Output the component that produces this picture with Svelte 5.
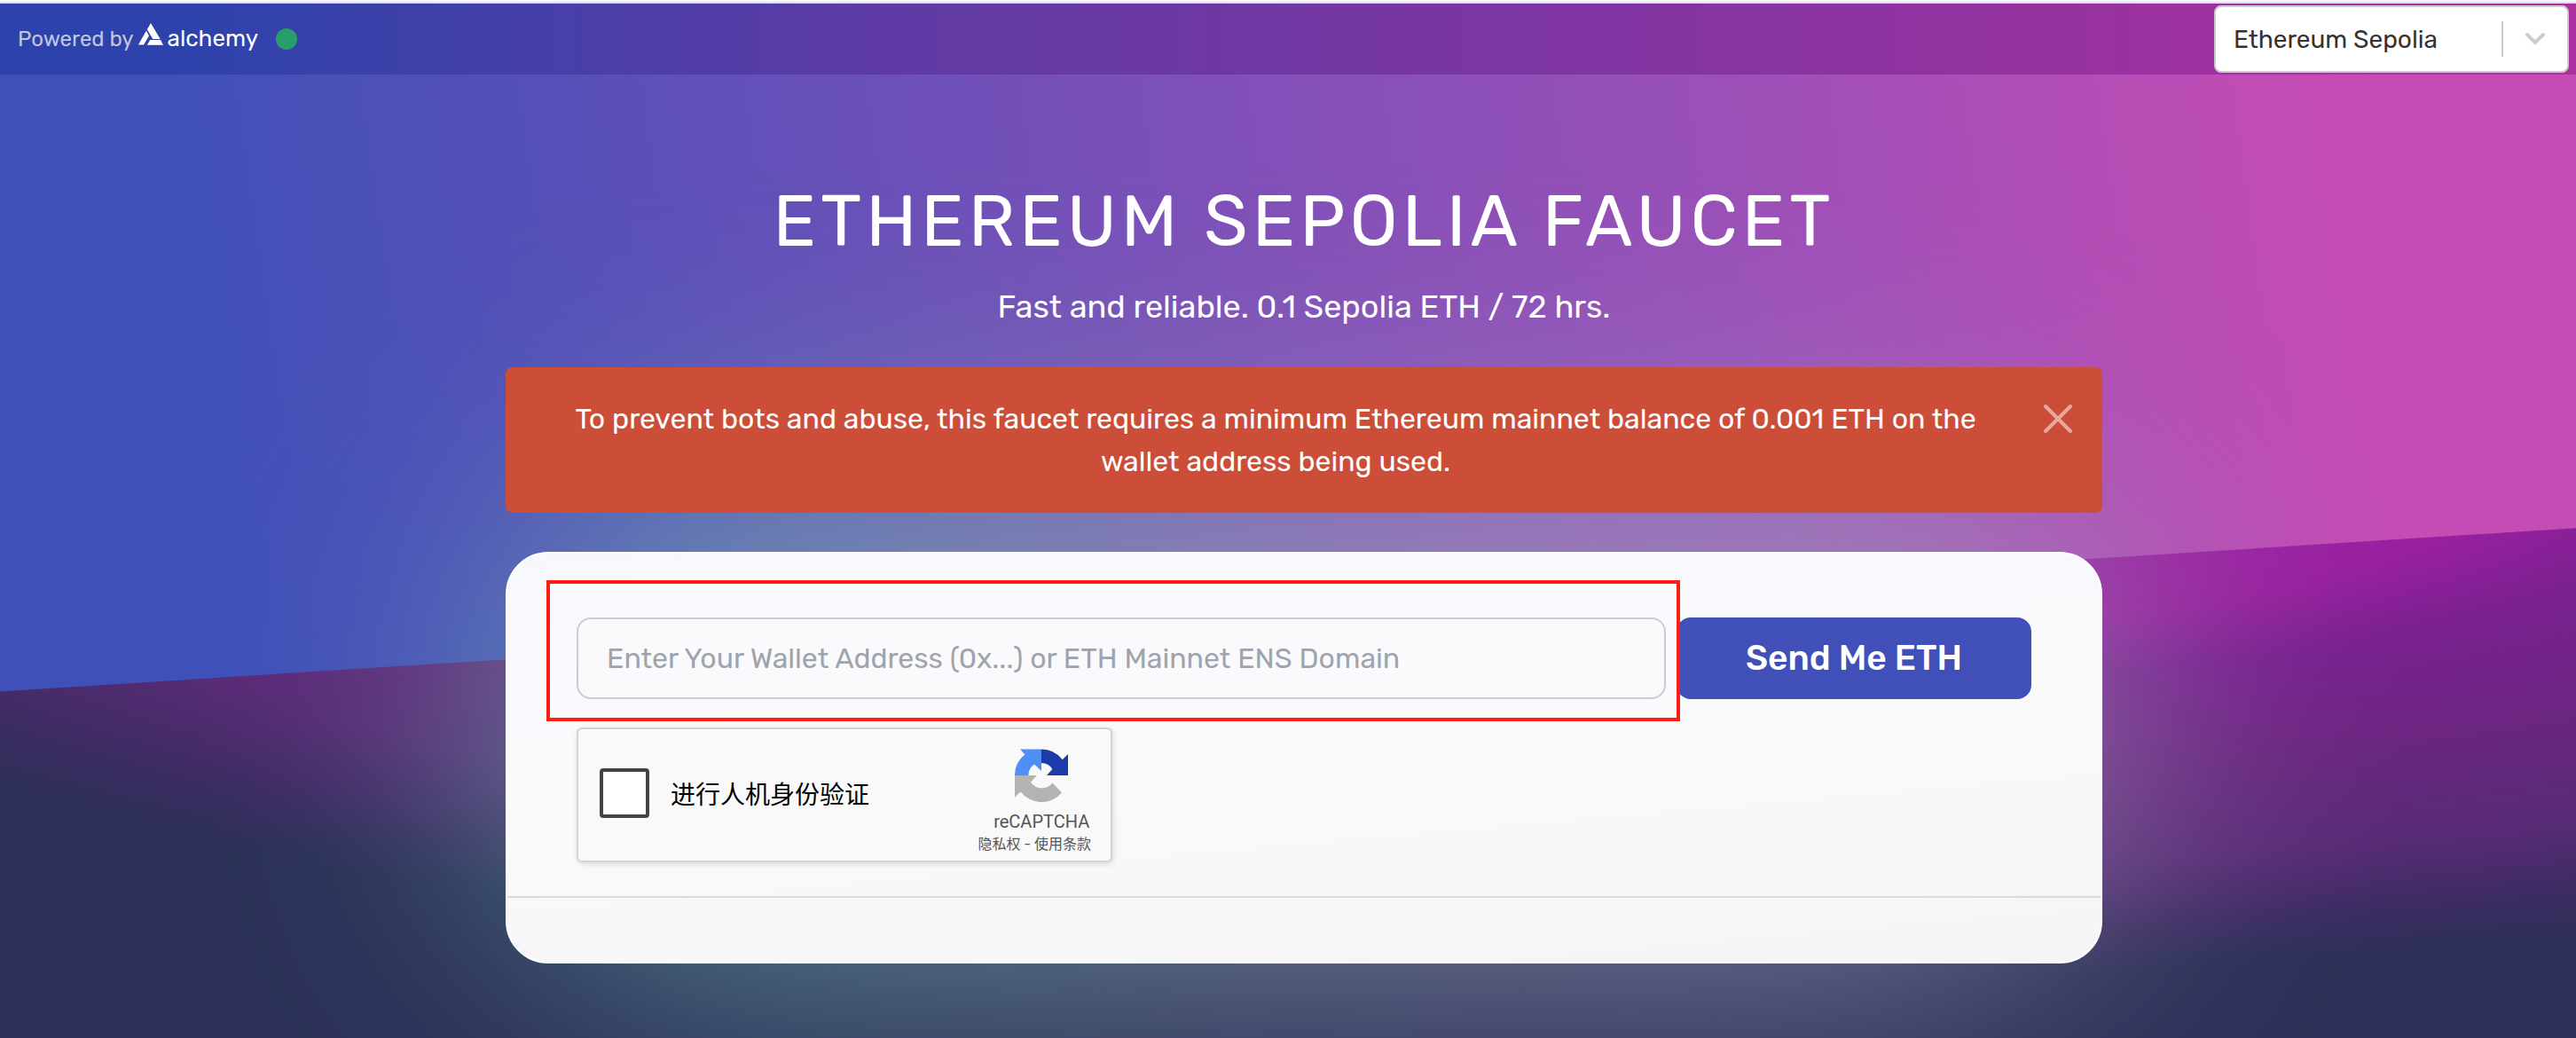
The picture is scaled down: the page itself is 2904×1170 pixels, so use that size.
<script>
  let network = $state('sepolia');
  let address = $state('');
  let verified = $state(false);
  let noticeOpen = $state(true);
</script>

<div class="page">
  <div class="backdrop" aria-hidden="true">
    <div class="upper"></div>
    <div class="lower"></div>
  </div>

  <header>
    <a class="brand" href="#alchemy">
      <span class="powered">Powered by</span>
      <svg class="mark" viewBox="0 0 28 26" aria-hidden="true">
        <path d="M14 0 L9.8 7.2 L16.4 18 H24.6 Z" />
        <path d="M8.8 8.8 L0 24.6 H6 L12 14.2 Z" />
        <path d="M13.2 19 L9.8 24.8 H28 L25 19 Z" />
      </svg>
      <span class="name">alchemy</span>
    </a>
    <span class="status" role="img" aria-label="Online"></span>
    <div class="network">
      <select aria-label="Network" bind:value={network}>
        <option value="sepolia">Ethereum Sepolia</option>
      </select>
      <span class="bar"></span>
      <svg viewBox="0 0 24 16" aria-hidden="true"><path d="M3 3 L12 12 L21 3" /></svg>
    </div>
  </header>

  <main>
    <h1>ETHEREUM SEPOLIA FAUCET</h1>
    <p class="tagline">Fast and reliable. 0.1 Sepolia ETH / 72 hrs.</p>

    {#if noticeOpen}
      <div class="notice">
        <p>
          To prevent bots and abuse, this faucet requires a minimum Ethereum mainnet balance of 0.001 ETH on the
          <br />wallet address being used.
        </p>
        <button class="close" aria-label="Close" onclick={() => (noticeOpen = false)}>
          <svg viewBox="0 0 32 32" aria-hidden="true"><path d="M2 2 L30 30 M30 2 L2 30" /></svg>
        </button>
      </div>
    {/if}

    <div class="panel">
      <div class="glow" aria-hidden="true"></div>
      <form class="card" onsubmit={(e) => e.preventDefault()}>
        <div class="body">
          <div class="entry">
            <div class="field">
              <input
                type="text"
                aria-label="Wallet address"
                placeholder="Enter Your Wallet Address (0x...) or ETH Mainnet ENS Domain"
                bind:value={address}
              />
              <span class="highlight"></span>
            </div>
            <button class="send" type="submit">Send Me ETH</button>
          </div>

          <div class="captcha">
            <label><input type="checkbox" bind:checked={verified} />进行人机身份验证</label>
            <div class="provider">
              <svg viewBox="0 0 60 60" aria-hidden="true">
                <path fill="#1c3aa9" d="M60 30V6l-6.300 6.300A30 30 0 0 0 30 .6V16a14.500 14.500 0 0 1 12.400 7L36 30Z" />
                <path fill="#4d8ff5" d="M30 .6H6l5.300 5.800A30 30 0 0 0 0 30H15.400A15 15 0 0 1 22 17.600L30 25Z" />
                <path fill="#b3b3b3" d="M0 30V54.500l6.500-6A30 30 0 0 0 53 49.500L42.500 38.500A15 15 0 0 1 18 37.500L25 30Z" />
              </svg>
              <span class="product">reCAPTCHA</span>
              <span class="links"><a href="#privacy">隐私权</a> - <a href="#terms">使用条款</a></span>
            </div>
          </div>
        </div>
        <div class="footer"></div>
      </form>
    </div>
  </main>
</div>

<style>
  :global(body) {
    margin: 0;
  }

  .page {
    position: relative;
    isolation: isolate;
    overflow: hidden;
    box-sizing: border-box;
    min-height: 100vh;
    border-top: 2px solid #f8f8fc;
    font-family: Rubik, Roboto, 'Noto Sans CJK SC', sans-serif;
    color: #fff;
  }

  .backdrop {
    position: absolute;
    inset: 0;
    z-index: -2;
    border-top: 2px solid #dfe0ec;
  }

  .upper,
  .lower {
    position: absolute;
    inset: 0;
  }

  .upper {
    background: linear-gradient(82deg, #3f50b9 10%, #5a50b8 27%, #7e50b8 49%, #9a50b8 68%, #c54cb4 91%);
  }

  .lower {
    clip-path: polygon(0 66.500%, 100% 50.700%, 100% 100%, 0 100%);
    background:
      radial-gradient(
        ellipse 88% 51% at 67% 43%,
        #a82ab0,
        #98209f 36%,
        #7a2090 46%,
        #6a2680 63%,
        #582b76 80%,
        #3c2c62 92%,
        #2c3058
      );
  }

  header {
    display: flex;
    align-items: center;
    box-sizing: border-box;
    height: 80px;
    margin-top: 2px;
    padding: 0 8px 0 20px;
    background: linear-gradient(90deg, #2d43ab 7%, #5e3ba4 34%, #8035a2 62%, #ac309f 98%);
  }

  .brand {
    display: flex;
    align-items: baseline;
    gap: 5px;
    padding-bottom: 4px;
    color: #fff;
    text-decoration: none;
  }

  .powered {
    color: #c3c6dd;
    font-size: 24px;
  }

  .mark {
    width: 28px;
    height: 26px;
    fill: #fff;
  }

  .name {
    font-size: 26px;
  }

  .status {
    width: 24px;
    height: 24px;
    margin-left: 20px;
    border-radius: 50%;
    background: #289e68;
  }

  .network {
    display: flex;
    align-items: center;
    box-sizing: border-box;
    width: 400px;
    height: 76px;
    margin-left: auto;
    padding-right: 24px;
    border: 2px solid #ccc;
    border-radius: 8px;
    background: #fff;
  }

  .network select {
    flex: 1;
    height: 100%;
    padding: 0 20px;
    border: 0;
    appearance: none;
    background: none;
    color: #333;
    font: inherit;
    font-size: 28px;
  }

  .bar {
    width: 2px;
    height: 40px;
    margin-right: 24px;
    background: #ccc;
  }

  .network svg {
    width: 24px;
    height: 16px;
    fill: none;
    stroke: #ccc;
    stroke-width: 4;
    stroke-linecap: round;
  }

  main {
    display: flex;
    flex-direction: column;
    align-items: stretch;
    max-width: 1800px;
    margin: 0 auto;
    padding: 116px 0 80px 36px;
  }

  h1 {
    margin: 0;
    font-size: 80px;
    font-weight: 400;
    line-height: 100px;
    letter-spacing: 5px;
    text-align: center;
  }

  .tagline {
    margin: 24px 0 46px;
    font-size: 36px;
    line-height: 44px;
    text-align: center;
  }

  .notice {
    position: relative;
    display: flex;
    align-items: flex-start;
    padding: 34px 34px 34px 34px;
    border-radius: 8px;
    background: #cc4e39;
  }

  .notice p {
    flex: 1;
    margin: 0;
    font-size: 32px;
    line-height: 48px;
    text-align: center;
  }

  .close {
    display: flex;
    margin: 8px 0 0 32px;
    padding: 0;
    border: 0;
    background: none;
  }

  .close svg {
    width: 32px;
    height: 32px;
    fill: none;
    stroke: #eaa99d;
    stroke-width: 4;
    stroke-linecap: round;
  }

  .panel {
    position: relative;
    margin-top: 44px;
  }

  .glow {
    position: absolute;
    inset: -80px -20px -10px;
    z-index: -1;
    border-radius: 300px;
    background: linear-gradient(90deg, #60b4ac, #80b4ac 30%, #a0a4b8 60%, #9ca0b8);
    filter: blur(160px);
    opacity: 0.7;
  }

  .card {
    box-sizing: border-box;
    border: 2px solid #fff;
    border-radius: 48px;
    background: linear-gradient(175deg, #f6f8fc, #fafafc 45%, #f5f5f8);
  }

  .body {
    padding: 72px 78px 38px;
    border-bottom: 2px solid #dadade;
  }

  .entry {
    display: flex;
    gap: 12px;
    margin-bottom: 32px;
  }

  .field {
    position: relative;
    flex: 1;
  }

  .field input {
    box-sizing: border-box;
    width: 100%;
    height: 92px;
    padding: 0 32px;
    border: 2px solid #c9ccd4;
    border-radius: 16px;
    background: #fafafc;
    color: #333;
    font: inherit;
    font-size: 32px;
  }

  .field input::placeholder {
    color: #9ea4ae;
    opacity: 1;
  }

  .highlight {
    position: absolute;
    inset: -42px -16px -25px -34px;
    z-index: 1;
    border: 4px solid #ff1d12;
    pointer-events: none;
  }

  .send {
    width: 400px;
    height: 92px;
    border: 0;
    border-radius: 16px;
    background: #414fb9;
    color: #fff;
    font: inherit;
    font-size: 39px;
    font-weight: 500;
  }

  .captcha {
    display: flex;
    justify-content: space-between;
    align-items: center;
    box-sizing: border-box;
    width: 604px;
    height: 152px;
    padding: 0 22px 0 24px;
    border: 2px solid #d3d3d3;
    border-radius: 6px;
    background: #f9f9f9;
    box-shadow: 1px 2px 6px rgba(0, 0, 0, 0.12);
    color: #000;
  }

  .captcha label {
    display: flex;
    align-items: center;
    gap: 24px;
    margin-bottom: 4px;
    font-size: 28px;
  }

  .captcha input {
    width: 56px;
    height: 56px;
    margin: 0;
    appearance: none;
    border: 4px solid #444;
    border-radius: 4px;
    background: #fff;
  }

  .provider {
    display: flex;
    flex-direction: column;
    align-items: center;
    align-self: flex-start;
    margin-top: 22px;
    color: #555;
  }

  .provider svg {
    width: 60px;
    height: 60px;
    margin: 0 0 10px 16px;
  }

  .product {
    margin-left: 16px;
    font-family: Roboto, sans-serif;
    font-size: 20px;
    line-height: 24px;
  }

  .links {
    font-size: 16px;
    line-height: 28px;
  }

  .links a {
    color: inherit;
    text-decoration: none;
  }

  .footer {
    height: 72px;
  }
</style>
